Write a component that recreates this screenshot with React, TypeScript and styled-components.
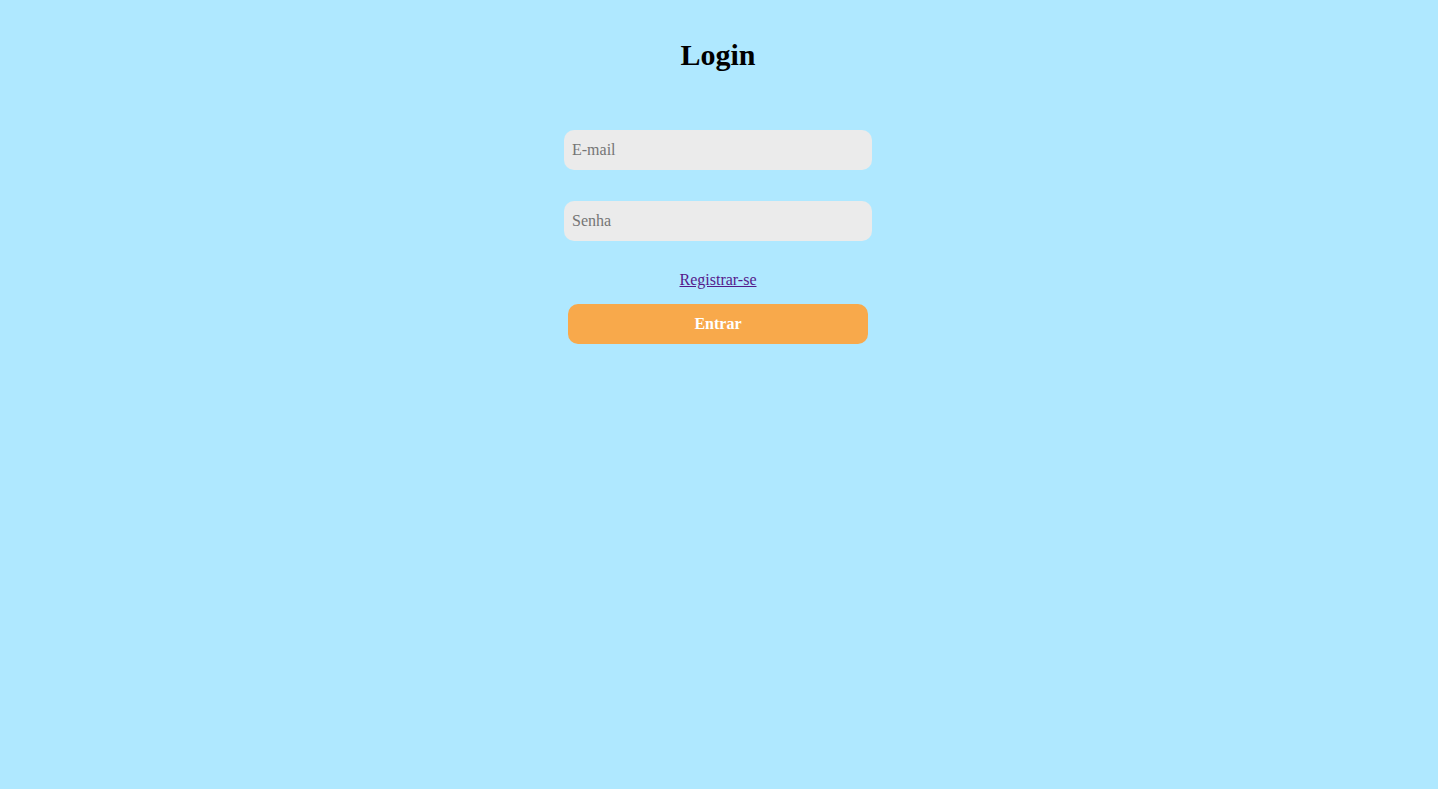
import styled, { createGlobalStyle } from 'styled-components';

const GlobalStyle = createGlobalStyle`
  html, body {
    margin: 0;
    padding: 0;
    background: #afe8ff;
  }
  body {
    font-family: "Liberation Serif", "Times New Roman", serif;
  }
`;

const Page = styled.div`
  min-height: 100vh;
  display: flex;
  flex-direction: column;
  align-items: center;
  padding: 37px 2px 0 0;
  box-sizing: border-box;
`;

const Title = styled.h1`
  margin: 0;
  font-size: 30px;
  line-height: 36px;
  font-weight: bold;
  color: #000;
`;

const Form = styled.form`
  margin-top: 57px;
  display: flex;
  flex-direction: column;
  align-items: center;
`;

const Field = styled.input`
  width: 308px;
  height: 40px;
  box-sizing: border-box;
  border: none;
  border-radius: 10px;
  background: #ebebeb;
  padding: 0 8px;
  font-family: "Liberation Serif", "Times New Roman", serif;
  font-size: 16px;
  color: #333;
  outline: none;

  & + & {
    margin-top: 31px;
  }

  &::placeholder {
    color: #757575;
  }
`;

const RegisterLink = styled.a`
  margin-top: 30px;
  font-size: 16px;
  line-height: 18px;
  color: #551a8b;
  text-decoration: underline;
`;

const SubmitButton = styled.button`
  margin-top: 15px;
  width: 300px;
  height: 40px;
  border: none;
  border-radius: 10px;
  background: #f8a94b;
  color: #fff;
  font-family: "Liberation Serif", "Times New Roman", serif;
  font-size: 16px;
  font-weight: bold;
  cursor: pointer;
`;

export default function App() {
  return (
    <>
      <GlobalStyle />
      <Page>
        <Title>Login</Title>
        <Form onSubmit={(e) => e.preventDefault()}>
          <Field type="email" placeholder="E-mail" />
          <Field type="password" placeholder="Senha" />
          <RegisterLink href="#registro">Registrar-se</RegisterLink>
          <SubmitButton type="submit">Entrar</SubmitButton>
        </Form>
      </Page>
    </>
  );
}
